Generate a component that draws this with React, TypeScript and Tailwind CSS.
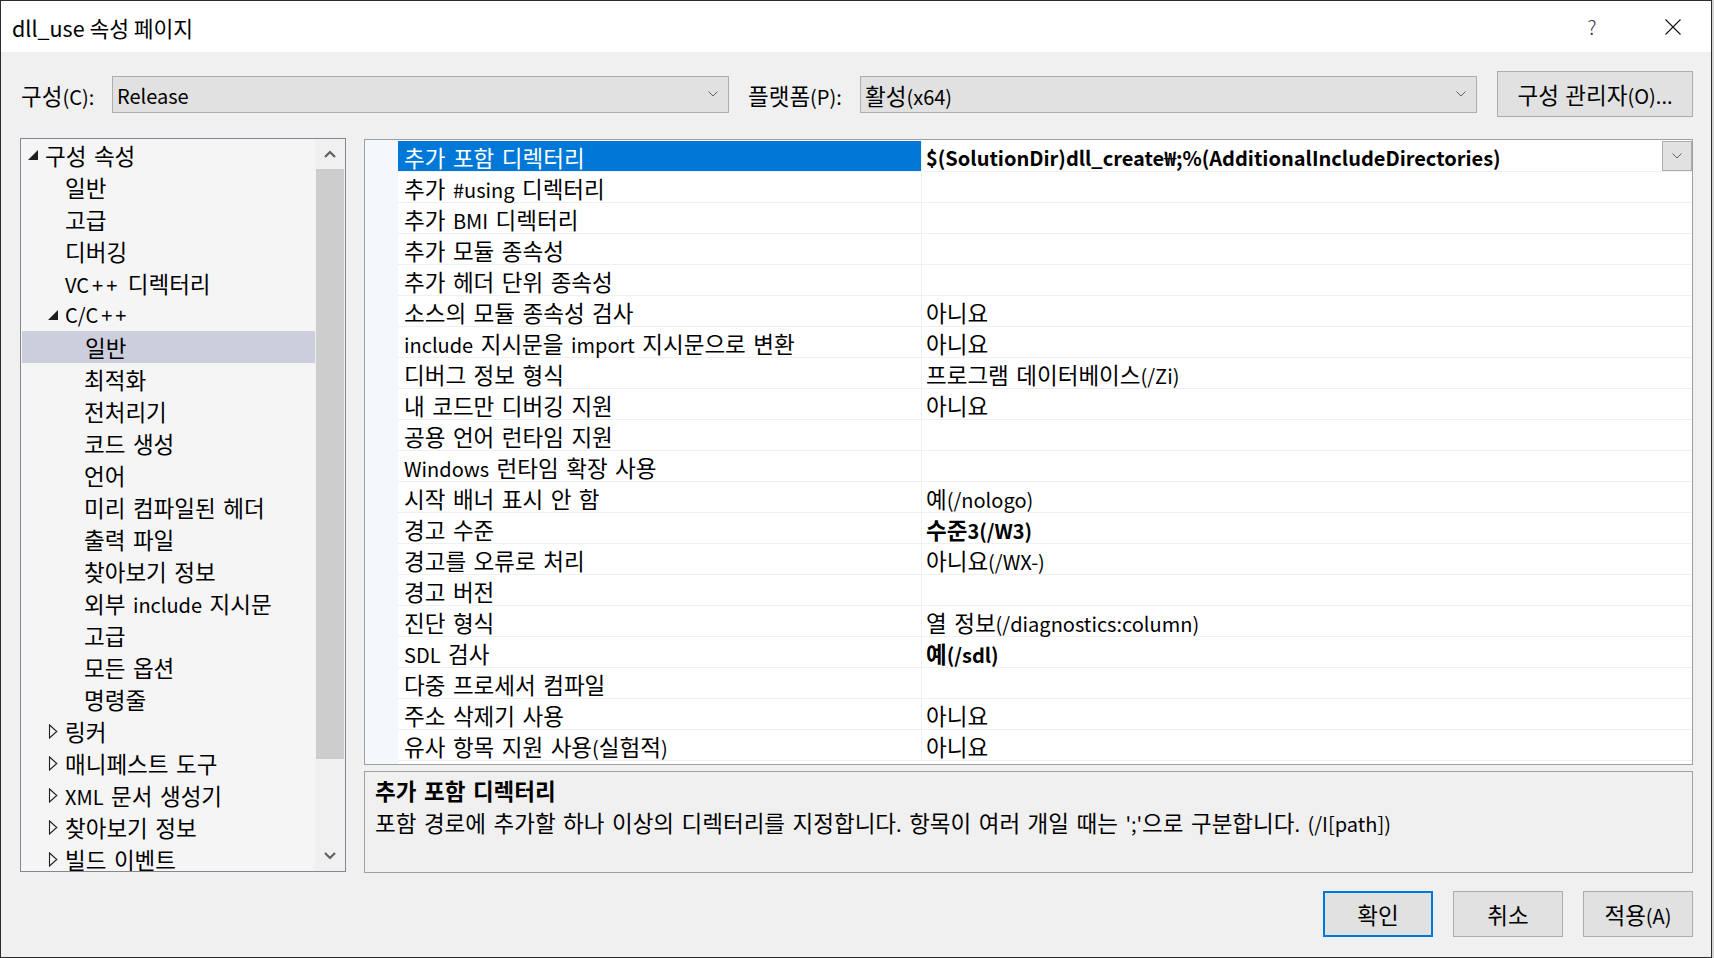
import React from "react";

type TreeItem = { label: string; level: 0 | 1 | 2; exp?: "open" | "closed"; selected?: boolean };

const tree: TreeItem[] = [
  { label: "구성 속성", level: 0, exp: "open" },
  { label: "일반", level: 1 },
  { label: "고급", level: 1 },
  { label: "디버깅", level: 1 },
  { label: "VC++ 디렉터리", level: 1 },
  { label: "C/C++", level: 1, exp: "open" },
  { label: "일반", level: 2, selected: true },
  { label: "최적화", level: 2 },
  { label: "전처리기", level: 2 },
  { label: "코드 생성", level: 2 },
  { label: "언어", level: 2 },
  { label: "미리 컴파일된 헤더", level: 2 },
  { label: "출력 파일", level: 2 },
  { label: "찾아보기 정보", level: 2 },
  { label: "외부 include 지시문", level: 2 },
  { label: "고급", level: 2 },
  { label: "모든 옵션", level: 2 },
  { label: "명령줄", level: 2 },
  { label: "링커", level: 1, exp: "closed" },
  { label: "매니페스트 도구", level: 1, exp: "closed" },
  { label: "XML 문서 생성기", level: 1, exp: "closed" },
  { label: "찾아보기 정보", level: 1, exp: "closed" },
  { label: "빌드 이벤트", level: 1, exp: "closed" },
];

const indent = ["pl-[7px]", "pl-[27px]", "pl-[46px]"];

type Prop = { name: string; value?: string; bold?: boolean };

const props: Prop[] = [
  { name: "추가 포함 디렉터리", value: "$(SolutionDir)dll_create₩;%(AdditionalIncludeDirectories)", bold: true },
  { name: "추가 #using 디렉터리" },
  { name: "추가 BMI 디렉터리" },
  { name: "추가 모듈 종속성" },
  { name: "추가 헤더 단위 종속성" },
  { name: "소스의 모듈 종속성 검사", value: "아니요" },
  { name: "include 지시문을 import 지시문으로 변환", value: "아니요" },
  { name: "디버그 정보 형식", value: "프로그램 데이터베이스(/Zi)" },
  { name: "내 코드만 디버깅 지원", value: "아니요" },
  { name: "공용 언어 런타임 지원" },
  { name: "Windows 런타임 확장 사용" },
  { name: "시작 배너 표시 안 함", value: "예(/nologo)" },
  { name: "경고 수준", value: "수준3(/W3)", bold: true },
  { name: "경고를 오류로 처리", value: "아니요(/WX-)" },
  { name: "경고 버전" },
  { name: "진단 형식", value: "열 정보(/diagnostics:column)" },
  { name: "SDL 검사", value: "예(/sdl)", bold: true },
  { name: "다중 프로세서 컴파일" },
  { name: "주소 삭제기 사용", value: "아니요" },
  { name: "유사 항목 지원 사용(실험적)", value: "아니요" },
];

// hangul runs get a bigger size than latin, the way the dialog font renders them
function T({ s }: { s: string }) {
  const parts = s.split(/([가-힣]+|\++)/);
  return (
    <span className="whitespace-nowrap">
      {parts.map((p, i) => {
        if (/[가-힣]/.test(p))
          return (
            <span key={i} className="text-[22.5px]">
              {p}
            </span>
          );
        if (p.startsWith("+"))
          return (
            <span key={i} className="tracking-[3px] pl-[3px]">
              {p}
            </span>
          );
        return <span key={i}>{p}</span>;
      })}
    </span>
  );
}

function SmallChevron() {
  return (
    <svg width="10" height="6" viewBox="0 0 10 6" fill="none">
      <path d="M0.5 0.5 L5 5 L9.5 0.5" stroke="#606060" strokeWidth="1" />
    </svg>
  );
}

function ScrollChevron({ up }: { up?: boolean }) {
  return (
    <svg width="12" height="8" viewBox="0 0 12 8" fill="none">
      <path d={up ? "M1 7 L6 2 L11 7" : "M1 1 L6 6 L11 1"} stroke="#606060" strokeWidth="2.2" />
    </svg>
  );
}

function Expander({ kind }: { kind?: "open" | "closed" }) {
  return (
    <span className="w-[17px] h-full flex items-center">
      {kind === "open" && (
        <svg width="10" height="10" viewBox="0 0 10 10">
          <path d="M10 0 L10 10 L0 10 Z" fill="#1e1e1e" />
        </svg>
      )}
      {kind === "closed" && (
        <svg width="10" height="15" viewBox="0 0 10 15" fill="none">
          <path d="M1.5 1 L8.8 7.5 L1.5 14 Z" stroke="#1e1e1e" strokeWidth="1.1" />
        </svg>
      )}
    </span>
  );
}

function Combo({ text }: { text: string }) {
  return (
    <div className="w-[617px] h-[37px] border border-[#adadad] bg-[#e1e1e1] flex items-center justify-between pl-[4px] pr-[10px]">
      <span className="pt-[3px]">
        <T s={text} />
      </span>
      <SmallChevron />
    </div>
  );
}

function Tree() {
  return (
    <div className="w-[326px] h-[734px] border border-[#828790] bg-[#f5f5f5] flex overflow-hidden">
      <div className="flex-1 flex flex-col overflow-hidden">
        {tree.map((t, i) => (
          <div
            key={i}
            className={`h-[32px] shrink-0 flex items-center ${indent[t.level]} ${t.selected ? "bg-[#cccedb] ml-[1px]" : ""}`}
          >
            <Expander kind={t.exp} />
            <T s={t.label} />
          </div>
        ))}
      </div>
      <div className="w-[30px] bg-[#f0f0f0] flex flex-col">
        <div className="h-[30px] flex items-center justify-center">
          <ScrollChevron up />
        </div>
        <div className="h-[590px] bg-[#cdcdcd] mx-[1px]" />
        <div className="flex-1" />
        <div className="h-[30px] flex items-center justify-center">
          <ScrollChevron />
        </div>
      </div>
    </div>
  );
}

function Grid() {
  return (
    <div className="h-[626px] border border-[#a0a0a0] bg-white flex">
      <div className="w-[33px] bg-[#f4f7fc]" />
      <div className="flex-1 flex flex-col pt-[1px]">
        {props.map((p, i) => (
          <div key={i} className="h-[31px] shrink-0 flex border-b border-[#f0f0f0]">
            <div
              className={`w-[523px] pl-[6px] pt-[3px] flex items-center ${i === 0 ? "bg-[#0078d7] text-white" : ""}`}
            >
              <T s={p.name} />
            </div>
            <div className="flex-1 border-l border-[#f0f0f0] pl-[4px] flex items-center justify-between">
              <span className={`pt-[3px] ${p.bold ? "font-bold" : ""}`}>{p.value ? <T s={p.value} /> : null}</span>
              {i === 0 && (
                <span className="w-[30px] h-[30px] border border-[#adadad] bg-[#e1e1e1] flex items-center justify-center">
                  <SmallChevron />
                </span>
              )}
            </div>
          </div>
        ))}
      </div>
    </div>
  );
}

function Button({ label, primary }: { label: string; primary?: boolean }) {
  return (
    <div
      className={`w-[110px] h-[46px] bg-[#e1e1e1] flex items-center justify-center ${primary ? "border-2 border-[#0078d7]" : "border border-[#adadad]"}`}
    >
      <T s={label} />
    </div>
  );
}

export default function App() {
  return (
    <div className="w-[1714px] h-[958px] flex bg-[#d4d4d4] font-['Noto_Sans_CJK_KR',sans-serif] text-[20px] text-black leading-none [word-spacing:3px]">
      <div className="w-[1712px] h-full border border-[#2b2b2b] flex flex-col">
        <div className="h-[51px] bg-white flex items-center pl-[11px] [word-spacing:0px]">
          <span className="flex-1 text-[21.5px] pt-[2px]">dll_use 속성 페이지</span>
          <span className="w-[80px] flex justify-center text-[20px] font-light text-[#333]">?</span>
          <span className="w-[3px]" />
          <span className="w-[76px] flex justify-center">
            <svg width="16" height="16" viewBox="0 0 16 16">
              <path d="M0.5 0.5 L15.5 15.5 M15.5 0.5 L0.5 15.5" stroke="#111" strokeWidth="1.1" />
            </svg>
          </span>
        </div>

        <div className="flex-1 bg-[#f0f0f0] pl-[19px] pr-[18px] pt-[19px] flex flex-col">
          <div className="h-[46px] flex items-center [word-spacing:2px]">
            <span className="w-[92px] pl-[1px] pt-[3px]">
              <T s="구성(C):" />
            </span>
            <Combo text="Release" />
            <span className="ml-[19px] w-[112px] pt-[3px]">
              <T s="플랫폼(P):" />
            </span>
            <Combo text="활성(x64)" />
            <div className="ml-[20px] w-[196px] h-[46px] border border-[#adadad] bg-[#e1e1e1] flex items-center justify-center">
              <T s="구성 관리자(O)..." />
            </div>
          </div>

          <div className="mt-[21px] h-[735px] flex">
            <Tree />
            <div className="ml-[18px] w-[1329px] pt-[1px] flex flex-col">
              <Grid />
              <div className="mt-[6px] h-[102px] border border-[#a0a0a0] bg-[#f0f0f0] px-[10px] pt-[3px] leading-[31px]">
                <div className="font-bold">
                  <T s="추가 포함 디렉터리" />
                </div>
                <div>
                  <T s="포함 경로에 추가할 하나 이상의 디렉터리를 지정합니다. 항목이 여러 개일 때는 ';'으로 구분합니다. (/I[path])" />
                </div>
              </div>
            </div>
          </div>

          <div className="mt-[18px] h-[46px] flex justify-end gap-[20px]">
            <Button label="확인" primary />
            <Button label="취소" />
            <Button label="적용(A)" />
          </div>
        </div>
      </div>
    </div>
  );
}
